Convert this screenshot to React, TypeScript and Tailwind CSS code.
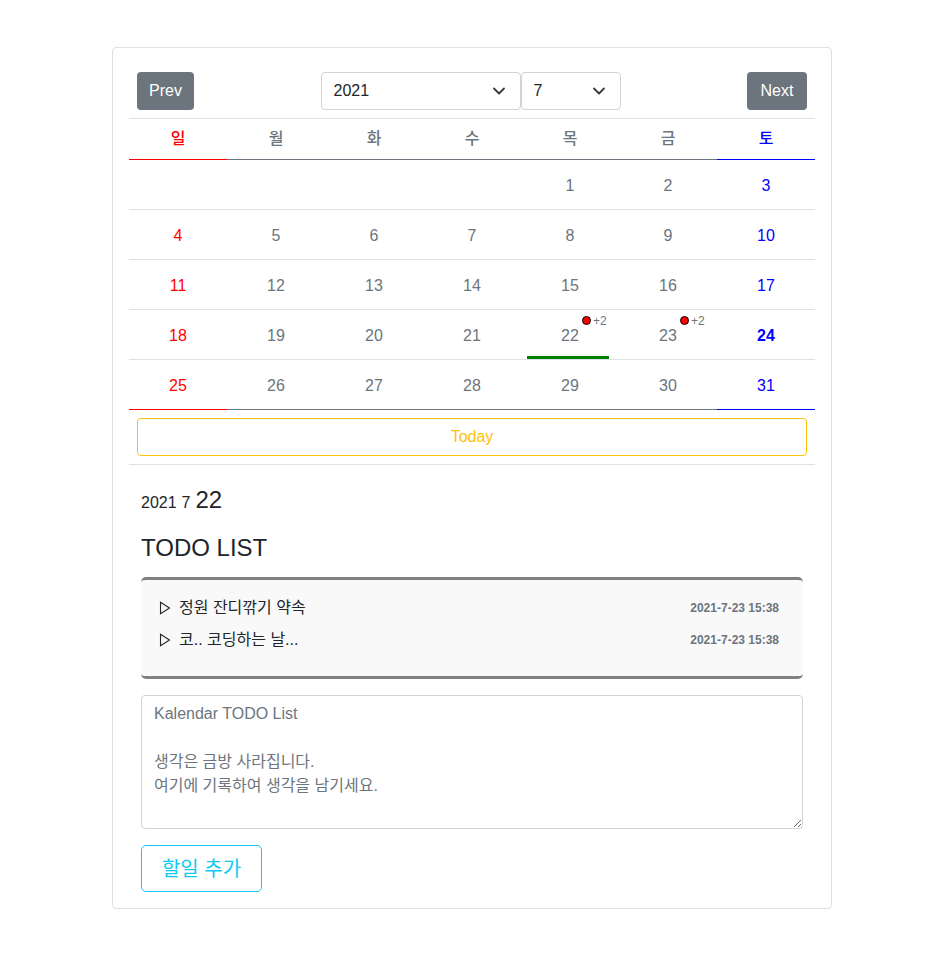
import React from "react";

const FONT = { fontFamily: '"Liberation Sans", "Noto Sans CJK KR", sans-serif' };

type Cell = { d: number | null; dot?: boolean; selected?: boolean; today?: boolean };

const weeks: Cell[][] = [
  [{ d: null }, { d: null }, { d: null }, { d: null }, { d: 1 }, { d: 2 }, { d: 3 }],
  [{ d: 4 }, { d: 5 }, { d: 6 }, { d: 7 }, { d: 8 }, { d: 9 }, { d: 10 }],
  [{ d: 11 }, { d: 12 }, { d: 13 }, { d: 14 }, { d: 15 }, { d: 16 }, { d: 17 }],
  [
    { d: 18 },
    { d: 19 },
    { d: 20 },
    { d: 21 },
    { d: 22, dot: true, selected: true },
    { d: 23, dot: true },
    { d: 24, today: true },
  ],
  [{ d: 25 }, { d: 26 }, { d: 27 }, { d: 28 }, { d: 29 }, { d: 30 }, { d: 31 }],
];

const days = ["일", "월", "화", "수", "목", "금", "토"];

function Chevron() {
  return (
    <svg width="16" height="16" viewBox="0 0 16 16" className="shrink-0">
      <path d="M3 5.5l5 5 5-5" fill="none" stroke="#343a40" strokeWidth="1.8" strokeLinecap="round" strokeLinejoin="round" />
    </svg>
  );
}

function Tri() {
  return (
    <svg width="12" height="14" viewBox="0 0 12 14" className="shrink-0">
      <path d="M1.5 1.2 L10.5 7 L1.5 12.8 Z" fill="none" stroke="#212529" strokeWidth="1.1" strokeLinejoin="miter" />
    </svg>
  );
}

export default function App() {
  return (
    <div className="min-h-screen bg-white pt-[47px]" style={FONT}>
      <div className="ml-[112px] w-[720px] rounded-[4px] border border-[#dfdfdf] p-4 text-[16px] leading-6 text-[#212529]">
        {/* top controls */}
        <div className="flex items-center justify-between p-2">
          <button className="h-[38px] w-[57px] rounded-[4px] bg-[#6c757d] text-[16px] text-white">Prev</button>
          <div className="flex">
            <div className="flex h-[38px] w-[200px] items-center justify-between rounded-[4px] border border-[#ced4da] pl-3 pr-[13px] text-[16px] text-[#212529]">
              <span>2021</span>
              <Chevron />
            </div>
            <div className="flex h-[38px] w-[100px] items-center justify-between rounded-[4px] border border-[#ced4da] pl-3 pr-[13px] text-[16px] text-[#212529]">
              <span>7</span>
              <Chevron />
            </div>
          </div>
          <button className="h-[38px] w-[60px] rounded-[4px] bg-[#6c757d] text-[16px] text-white">Next</button>
        </div>

        {/* header */}
        <div className="grid grid-cols-7 border-t border-[#dee2e6]">
          {days.map((d, i) => (
            <div
              key={d}
              className={
                "flex h-[41px] items-center justify-center border-b font-medium " +
                (i === 0
                  ? "border-[#ff0000] text-[#ff0000]"
                  : i === 6
                  ? "border-[#0000ff] text-[#0000ff]"
                  : "border-[#6c757d] text-[#6c757d]")
              }
            >
              {d}
            </div>
          ))}
        </div>

        {/* weeks */}
        {weeks.map((w, wi) => {
          const last = wi === weeks.length - 1;
          return (
            <div key={wi} className="grid grid-cols-7">
              {w.map((c, ci) => {
                const color =
                  ci === 0 ? "text-[#ff0000]" : ci === 6 ? "text-[#0000ff]" : "text-[#6c757d]";
                const border = last
                  ? ci === 0
                    ? "border-[#ff0000]"
                    : ci === 6
                    ? "border-[#0000ff]"
                    : "border-[#6c757d]"
                  : "border-[#dee2e6]";
                return (
                  <div
                    key={ci}
                    className={"relative flex h-[50px] items-center justify-center border-b pt-[2px] " + border + " " + color}
                  >
                    {c.d !== null && (
                      <span className={"relative " + (c.today ? "font-bold" : "")}>
                        {c.d}
                        {c.dot && (
                          <span className="absolute left-[calc(100%+3px)] top-[-11px] flex items-center gap-[2px] whitespace-nowrap text-[12px] leading-4 text-[#6c757d]">
                            <span className="inline-block h-[9px] w-[9px] rounded-full border border-black bg-[#ff0000]" />
                            +2
                          </span>
                        )}
                      </span>
                    )}
                    {c.selected && (
                      <span className="absolute bottom-0 left-[6px] right-[10px] h-[3px] bg-[#008000]" />
                    )}
                  </div>
                );
              })}
            </div>
          );
        })}

        {/* today */}
        <div className="border-b border-[#dee2e6] px-2 py-2">
          <button className="h-[38px] w-full rounded-[4px] border border-[#ffc107] text-[16px] text-[#ffc107]">
            Today
          </button>
        </div>

        {/* details */}
        <div className="px-3 pt-[17px]">
          <div className="flex items-baseline gap-[5px] leading-9">
            <span className="text-[16px]">2021</span>
            <span className="text-[16px]">7</span>
            <span className="text-[24px]">22</span>
          </div>
          <div className="mt-[9px] text-[24px] leading-9">TODO LIST</div>
          <div className="mt-[11px] rounded-[5px] border-y-[3px] border-[#808080] bg-[#f9f9f9] pb-6 pl-[18px] pr-6 pt-4">
            <div className="flex h-6 items-center justify-between">
              <div className="flex items-center gap-[8px]">
                <Tri />
                <span>정원 잔디깎기 약속</span>
              </div>
              <span className="text-[12px] font-bold text-[#6c757d]">2021-7-23 15:38</span>
            </div>
            <div className="mt-2 flex h-6 items-center justify-between">
              <div className="flex items-center gap-[8px]">
                <Tri />
                <span>코.. 코딩하는 날...</span>
              </div>
              <span className="text-[12px] font-bold text-[#6c757d]">2021-7-23 15:38</span>
            </div>
          </div>
          <textarea
            rows={5}
            className="mt-4 block w-full rounded-[4px] border border-[#ced4da] px-3 py-[6px] text-[16px] leading-6 placeholder:text-[#6c757d]"
            placeholder={"Kalendar TODO List\n\n생각은 금방 사라집니다.\n여기에 기록하여 생각을 남기세요."}
          />
          <button className="mt-4 h-[47px] w-[121px] rounded-[5px] border border-[#0dcaf0] text-[20px] text-[#0dcaf0]">
            할일 추가
          </button>
        </div>
      </div>
    </div>
  );
}
